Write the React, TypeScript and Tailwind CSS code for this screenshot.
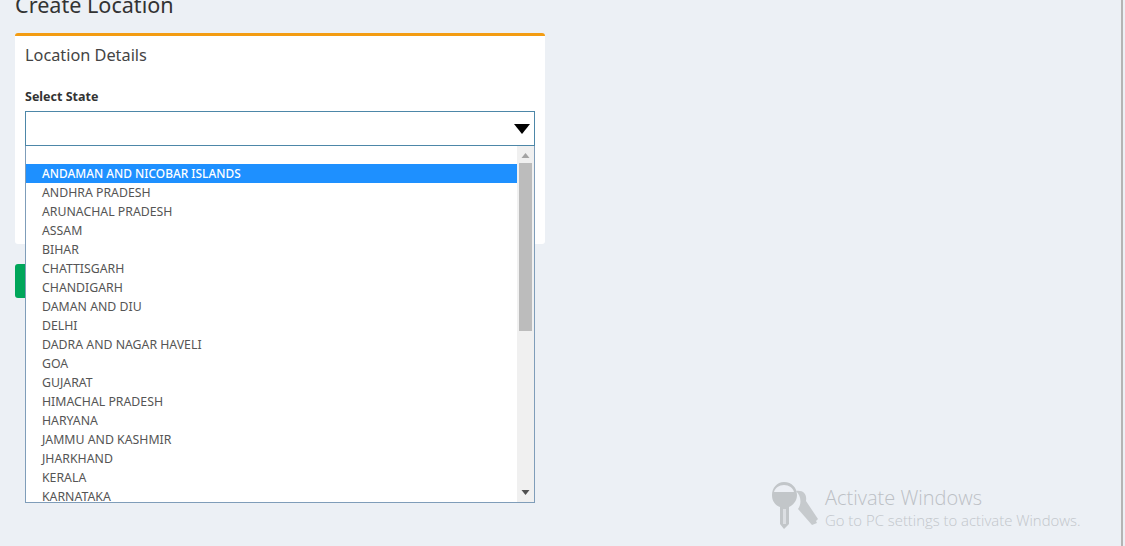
const states = [
  'ANDAMAN AND NICOBAR ISLANDS',
  'ANDHRA PRADESH',
  'ARUNACHAL PRADESH',
  'ASSAM',
  'BIHAR',
  'CHATTISGARH',
  'CHANDIGARH',
  'DAMAN AND DIU',
  'DELHI',
  'DADRA AND NAGAR HAVELI',
  'GOA',
  'GUJARAT',
  'HIMACHAL PRADESH',
  'HARYANA',
  'JAMMU AND KASHMIR',
  'JHARKHAND',
  'KERALA',
  'KARNATAKA',
]

function KeyIcon() {
  return (
    <svg width="48" height="50" viewBox="0 0 48 50" className="shrink-0">
      <path d="M25 10 C33 9 36 14 35 20 L47 38 L45 40 L46 42 L41 44 L27 28 C31 22 30 15 25 10 Z" fill="#c6cacd" />
      <path d="M13 1 C21 1 26 7 26 14 C26 20 22 24 18 26 L18 43 L13 48 L9 43 L9 26 C4 24 1 20 1 14 C1 7 6 1 13 1 Z" fill="#c2c6c9" />
      <path d="M13 4 C18 4 22 7 23 11 L3 11 C4 7 8 4 13 4 Z" fill="#eceff4" />
      <path d="M12 28 H15 V43 H12 Z" fill="#dcdfe3" />
    </svg>
  )
}

export default function App() {
  return (
    <div className="relative h-[546px] w-[1125px] overflow-hidden bg-[#ecf0f5] font-['Noto_Sans',sans-serif] text-[#333]">
      <div className="w-[1121px] pl-[15px]">
        <h1 className="-mt-[9px] h-[42px] text-[21.6px] leading-[28px] text-[#333]">Create Location</h1>
        <div className="h-[211px] w-[530px] rounded-[3px] border-t-[3px] border-[#f39c12] bg-white px-[10px]">
          <h3 className="pt-[7px] text-[16.3px] leading-[24px] text-[#444]">Location Details</h3>
          <label className="mt-[21px] block text-[12.5px] leading-[18px] font-bold">Select State</label>
        </div>
        <div className="mt-[20px] h-[34px] w-[60px] rounded-[3px] bg-[#00a65a]" />
      </div>

      <div className="absolute top-[111px] left-[25px] w-[510px]">
        <div className="flex h-[35px] items-center justify-end border border-[#4d87a8] bg-white pr-[4px]">
          <svg width="16" height="10" viewBox="0 0 16 10">
            <path d="M0 0 H16 L8 10 Z" fill="#000" />
          </svg>
        </div>
        <div className="flex h-[357px] border border-t-0 border-[#7f9db9] bg-white">
          <ul className="w-[491px] pt-[18px] text-[12.3px] leading-[19px] text-[#555]">
            {states.map((s, i) => (
              <li
                key={s}
                className={i === 0 ? 'h-[19px] bg-[#1e90ff] pl-[16px] text-[11.9px] font-medium text-white' : 'h-[19px] pl-[16px]'}
              >
                {s}
              </li>
            ))}
          </ul>
          <div className="flex w-[17px] flex-col items-center bg-[#f0f0f0]">
            <svg width="9" height="17" viewBox="0 0 9 17" className="shrink-0">
              <path d="M0.5 12 L4.5 7 L8.5 12 Z" fill="#a3a3a3" />
            </svg>
            <div className="h-[168px] w-[13px] bg-[#bcbcbc]" />
            <div className="flex-1" />
            <svg width="9" height="17" viewBox="0 0 9 17" className="shrink-0">
              <path d="M0.5 5 L8.5 5 L4.5 10 Z" fill="#505050" />
            </svg>
          </div>
        </div>
      </div>

      <div className="absolute top-[481px] left-[771px] flex gap-[6px] font-['Open_Sans',sans-serif]">
        <KeyIcon />
        <div className="pt-[5px]">
          <div className="text-[20px] leading-[24px] font-light text-[#bcc0c5]">Activate Windows</div>
          <div className="text-[14.9px] leading-[20px] font-light text-[#c2c6cb]">Go to PC settings to activate Windows.</div>
        </div>
      </div>

      <div className="absolute top-0 right-0 h-full w-[4px] bg-[#b4b4b4]">
        <div className="ml-[2px] h-full w-[2px] bg-[#ecf0f5]" />
      </div>
    </div>
  )
}
